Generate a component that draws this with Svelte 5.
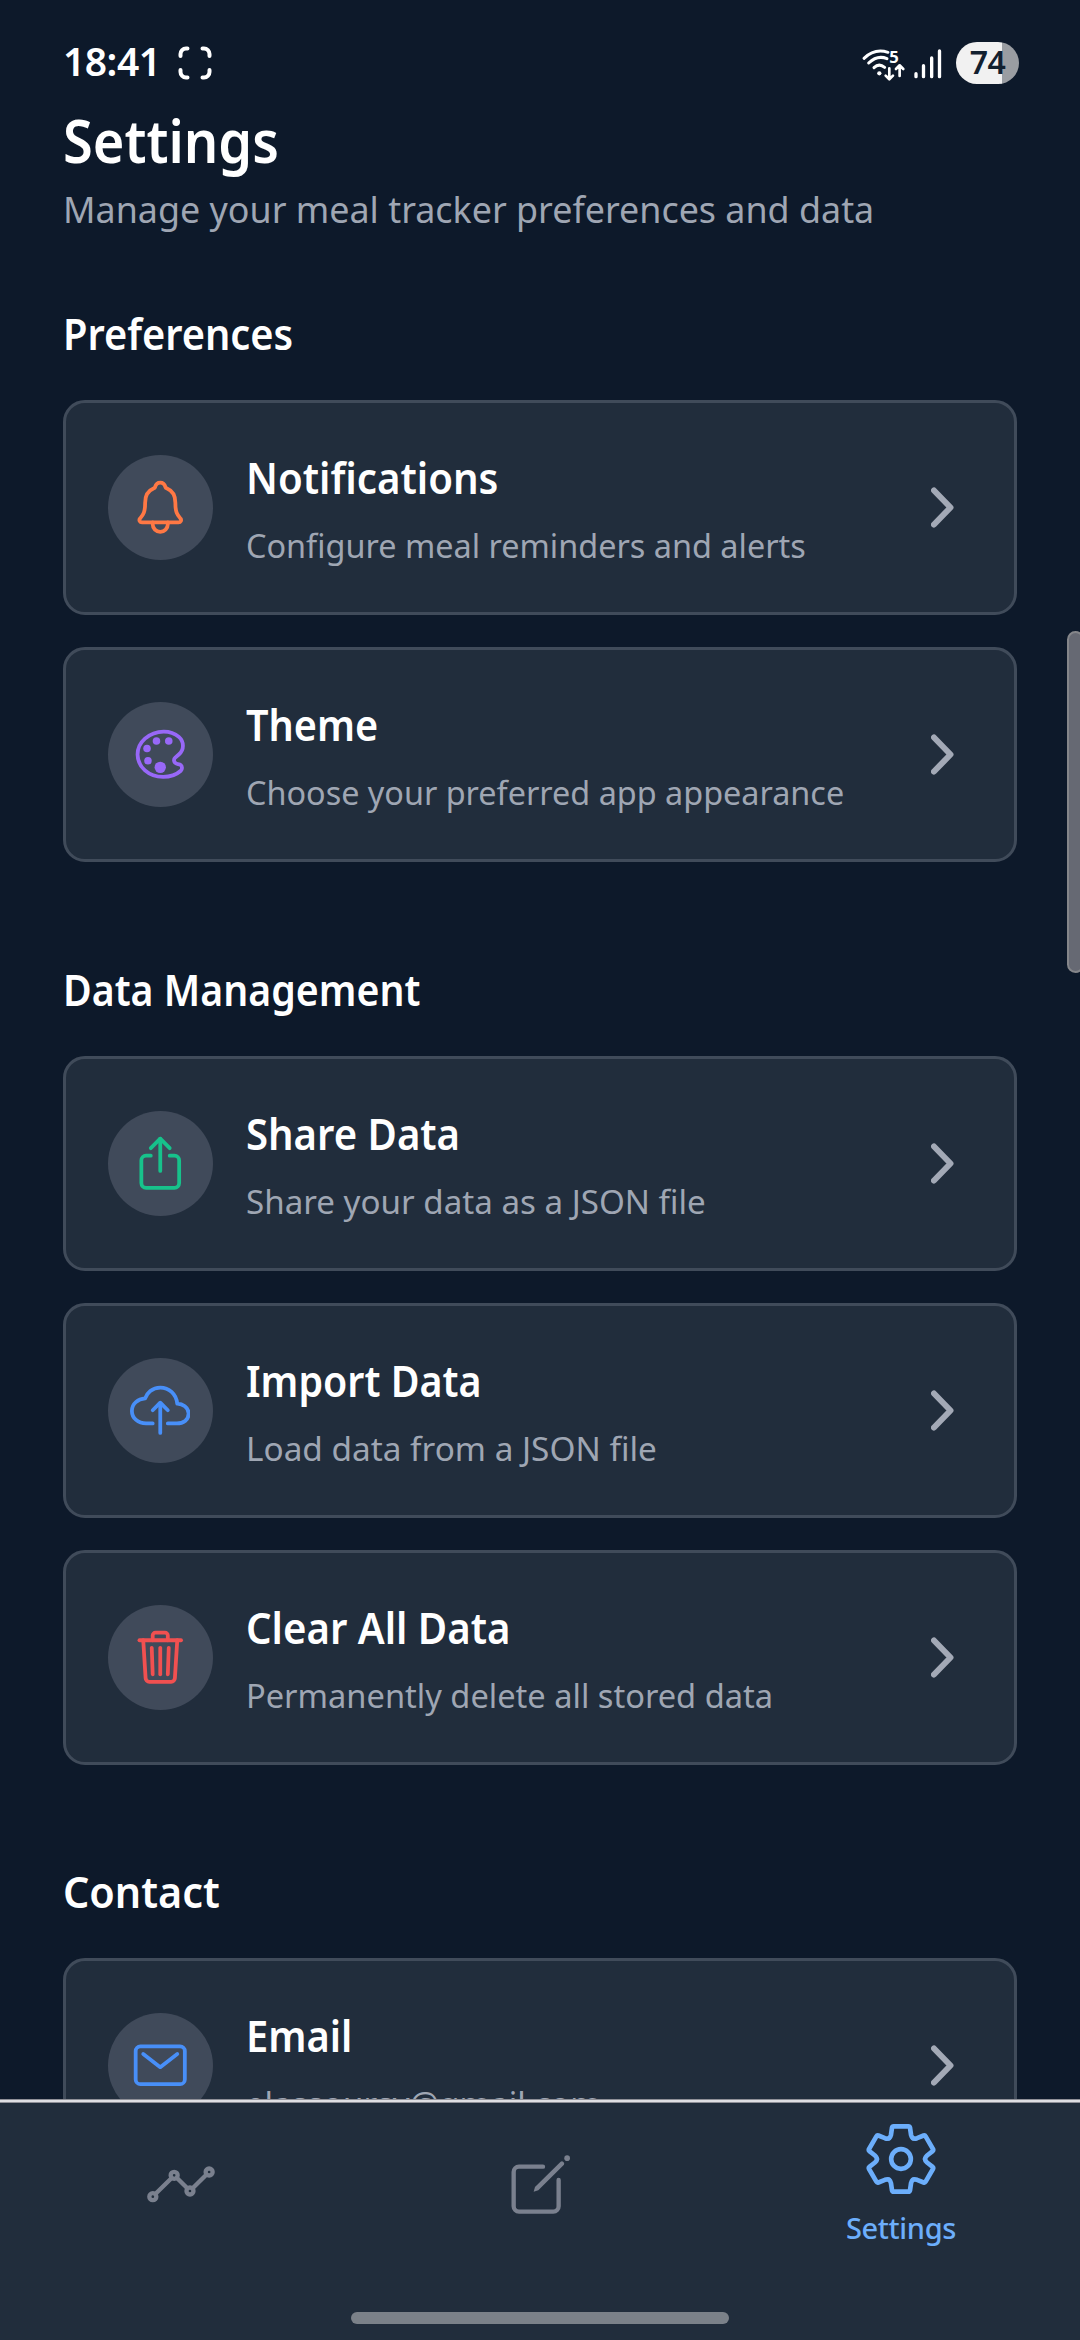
<script>
  // `fit` values condense the font horizontally, string by string.
  const sections = [
    {
      title: 'Preferences', fit: 0.904,
      rows: [
        { icon: 'bell', color: '#ff7844', title: 'Notifications', fit: 0.914, sub: 'Configure meal reminders and alerts', subFit: 0.982 },
        { icon: 'palette', color: '#9868f8', title: 'Theme', fit: 0.9, sub: 'Choose your preferred app appearance', subFit: 0.981 }
      ]
    },
    {
      title: 'Data Management', fit: 0.892,
      rows: [
        { icon: 'share', color: '#17c28b', title: 'Share Data', fit: 0.911, sub: 'Share your data as a JSON file', subFit: 1.004 },
        { icon: 'cloud', color: '#488ff8', title: 'Import Data', fit: 0.895, sub: 'Load data from a JSON file', subFit: 1.01 },
        { icon: 'trash', color: '#f15050', title: 'Clear All Data', fit: 0.912, sub: 'Permanently delete all stored data', subFit: 0.988 }
      ]
    },
    {
      title: 'Contact', fit: 0.939,
      rows: [
        { icon: 'mail', color: '#488ff8', title: 'Email', fit: 0.905, sub: 'elassoursy@gmail.com', subFit: 0.998 }
      ]
    }
  ];

  const paths = {
    bell: ['M427.68 351.43C402 320 383.87 304 383.87 217.35 383.87 138 343.35 109.73 310 96c-4.43-1.82-8.6-6-9.95-10.55C294.2 65.54 277.8 48 256 48s-38.21 17.55-44 37.47c-1.35 4.6-5.52 8.71-9.95 10.53-33.39 13.75-73.87 41.92-73.87 121.35C128.13 304 110 320 84.32 351.43 73.68 364.45 83 384 101.61 384h308.88c18.51 0 27.77-19.61 17.19-32.57z', 'M320 384v16a64 64 0 01-128 0v-16'],
    palette: ['M430.11 347.9c-6.6-6.1-16.3-7.6-24.6-9-11.5-1.9-15.9-4-22.6-10-14.3-12.7-14.3-31.1 0-43.8l30.3-26.9c46.4-41 46.4-108.2 0-149.2-34.2-30.1-80.1-45-127.8-45-55.7 0-113.9 20.3-158.8 60.1-83.5 73.8-83.5 194.7 0 268.5 41.5 36.7 97.5 55 152.9 55.4h1.7c55.4 0 110-17.9 148.8-52.4 14.4-12.7 11.99-36.6.1-47.7z'],
    share: ['M336 192h40a40 40 0 0140 40v192a40 40 0 01-40 40H136a40 40 0 01-40-40V232a40 40 0 0140-40h40', 'M336 128l-80-80-80 80', 'M256 321V48'],
    cloud: ['M320 367.79h76c55 0 100-29.21 100-83.6s-53-81.47-96-83.6c-8.89-85.06-71-136.8-144-136.8-69 0-113.44 45.79-128 91.2-60 5.7-112 43.88-112 106.4s54 106.4 120 106.4h56', 'M320 255.79l-64-64-64 64', 'M256 448.21V207.79'],
    trash: ['M112 112l20 320c.95 18.49 14.4 32 32 32h184c17.67 0 30.87-13.51 32-32l20-320', 'M80 112h352', 'M192 112V72a23.93 23.93 0 0124-24h80a23.93 23.93 0 0124 24v40', 'M256 176v224', 'M184 176l8 224', 'M328 176l-8 224'],
    mail: ['M88 96h336a40 40 0 0140 40v240a40 40 0 01-40 40H88a40 40 0 01-40-40V136a40 40 0 0140-40z', 'M112 160l144 112 144-112']
  };
  const dots = [[224, 144, 32], [328, 144, 32], [144, 208, 32], [152, 311, 32], [256, 367, 48]];
  const teeth = [0, 60, 120, 180, 240, 300];
</script>

<div class="phone">
  <header class="status">
    <span class="time">18:41</span>
    <svg class="scan" viewBox="0 0 34 34"><path d="M2.5 10V8a5.500 5.500 0 015.500-5.500h1.500M24.500 2.500H26A5.500 5.500 0 0131.500 8v2M31.500 24v2a5.500 5.500 0 01-5.500 5.500h-1.500M9.500 31.500H8A5.500 5.500 0 012.500 26v-2" /></svg>
    <div class="spacer"></div>
    <svg class="wifi" viewBox="36 54 130 100">
      <path class="arc" d="M42 85Q74 54 114 67M56 99Q82 74 111 86M72 113Q87 98 104 112" />
      <circle cx="88" cy="130" r="6.500" />
      <text x="118" y="98">5</text>
      <path class="arrow" d="M118 115v31M107 137l11 11 11-11M149 138v-30M138 117l11-11 11 11" />
    </svg>
    <svg class="signal" viewBox="191 56 84 90"><path d="M197 130v9M219.500 106v33M244 83v56M267.500 62v77" /></svg>
    <div class="battery"><span>74</span></div>
  </header>

  <main>
    <h1><span class="fit" style:--fit={0.918}>Settings</span></h1>
    <p class="lead"><span class="fit" style:--fit={0.969}>Manage your meal tracker preferences and data</span></p>

    {#each sections as s}
      <section>
        <h2><span class="fit" style:--fit={s.fit}>{s.title}</span></h2>
        <div class="rows">
          {#each s.rows as r}
            <div class="card">
              <div class="badge">
                <svg class="icon" viewBox="0 0 512 512" style:color={r.color}>
                  {#each paths[r.icon] as d}<path {d} />{/each}
                  {#if r.icon === 'palette'}
                    {#each dots as [cx, cy, rad]}<circle {cx} {cy} r={rad} />{/each}
                  {/if}
                </svg>
              </div>
              <div class="text">
                <h3><span class="fit" style:--fit={r.fit}>{r.title}</span></h3>
                <p><span class="fit" style:--fit={r.subFit}>{r.sub}</span></p>
              </div>
              <svg class="chevron" viewBox="0 0 23 41"><path d="M3 3.500L19.500 20.500 3 37.500" /></svg>
            </div>
          {/each}
        </div>
      </section>
    {/each}
  </main>

  <nav>
    <div class="tabs">
      <div class="tab">
        <svg class="trend" viewBox="141 257 205 110">
          <path d="M166 341l49-48M231 293l31 31M278 324l41-41" />
          <circle cx="158.500" cy="349" r="10.500" /><circle cx="222.500" cy="285" r="10.500" /><circle cx="270" cy="332" r="10.500" /><circle cx="327.500" cy="275" r="10.500" />
        </svg>
      </div>
      <div class="tab">
        <svg class="compose" viewBox="1234 223 178 178">
          <path d="M1330 258H1258a16 16 0 00-16 16V377a16 16 0 0016 16H1361a16 16 0 0016-16V298" />
          <path class="solid" d="M1383 243a7 7 0 0110 9L1316 329l-14 4 4-14z" />
          <circle class="solid" cx="1402.500" cy="232.500" r="8.500" />
        </svg>
      </div>
      <div class="tab active">
        <svg class="gear" viewBox="-105 -105 210 210">
          {#each teeth as a}
            <path transform="rotate({a})" d="M-36 -62.400Q-31.700 -64.900 -30 -73L-27 -94Q-26 -98 -22 -98H22Q26 -98 27 -94L30 -73Q31.700 -64.900 36 -62.400" />
          {/each}
          <circle r="29.500" />
        </svg>
        <span class="label">Settings</span>
      </div>
    </div>
    <div class="home"></div>
  </nav>
  <div class="scrollbar"></div>
</div>

<style>
  :global(body) { margin: 0; background: #0d192a; }
  .phone {
    position: relative; display: flex; flex-direction: column;
    width: 1080px; height: 2340px; overflow: hidden;
    background: #0d192a; color: #fff;
    font-family: "Noto Sans", "Open Sans", sans-serif;
  }
  h1, h2, h3, p { margin: 0; font-weight: 600; white-space: nowrap; }
  svg { display: block; flex: none; fill: none; stroke: currentColor; stroke-linecap: round; stroke-linejoin: round; }
  .fit { display: inline-block; transform: scaleX(var(--fit)); transform-origin: left; }

  .status { display: flex; align-items: center; height: 100px; padding: 26px 61px 0 63px; box-sizing: border-box; flex: none; }
  .time { font-size: 39px; font-weight: 600; line-height: 54px; width: 115px; margin-top: -4px; letter-spacing: -0.5px; }
  .scan { width: 34px; height: 34px; stroke-width: 4; }
  .spacer { flex: 1; }
  .wifi { width: 43.300px; height: 33.300px; margin: 4px 9px 0 0; overflow: visible; }
  .wifi .arc { stroke-width: 9; }
  .wifi .arrow { stroke-width: 8; }
  .wifi circle { fill: #fff; stroke: none; }
  .wifi text { fill: #fff; stroke: none; font-size: 50px; font-weight: 700; }
  .signal { width: 28px; height: 30px; margin: 1px 14px 0 0; stroke-width: 10; }
  .battery {
    display: flex; justify-content: center; width: 63px; height: 42px; border-radius: 21px;
    background: linear-gradient(90deg, #f1f1f1 46px, #9a9da2 46px);
    color: #12202f; font-size: 32px; font-weight: 600; line-height: 40px; letter-spacing: -0.5px;
  }

  main { flex: 1; min-height: 0; overflow: hidden; padding: 0 63px; }
  h1 { font-size: 59px; line-height: 80px; }
  .lead { margin-top: 4px; font-size: 37px; font-weight: 400; line-height: 50px; color: #9fa6b3; }
  section { margin-top: 96.500px; }
  .lead + section { margin-top: 69px; }
  h2 { font-size: 44px; line-height: 60px; }
  .rows { display: flex; flex-direction: column; gap: 32px; margin-top: 37px; }
  .card {
    display: flex; align-items: center; height: 215px; box-sizing: border-box;
    padding: 0 60px 0 42px; border: 3px solid #404b5a; border-radius: 22px; background: #212d3c;
  }
  .badge { display: flex; align-items: center; justify-content: center; flex: none; width: 105px; height: 105px; border-radius: 50%; background: #404a5a; }
  .icon { width: 60.500px; height: 60.500px; margin-right: 1px; stroke-width: 32; }
  .icon circle { fill: currentColor; stroke: none; }
  .text { flex: 1; margin-left: 32.500px; }
  h3 { font-size: 44px; line-height: 60px; }
  .text p { margin: 16px 0 -1px; font-size: 33px; font-weight: 400; line-height: 46px; color: #9fa6b3; }
  .chevron { width: 23px; height: 41px; color: #a3a9b6; stroke-width: 6; }

  nav {
    display: flex; flex-direction: column; justify-content: space-between; align-items: center;
    flex: none; height: 241px; box-sizing: border-box; padding: 3px 0 16px;
    border-top: 1px solid #8e8f97; background: #212d3c;
    box-shadow: inset 0 2px #dedee3, inset 0 3px #8e8f97;
  }
  .tabs { display: flex; align-self: flex-start; width: 1080px; margin-left: 1px; }
  .tab { display: flex; flex: 1; flex-direction: column; align-items: center; justify-content: center; height: 163px; color: #7a808e; }
  .active { justify-content: flex-start; padding-top: 21px; box-sizing: border-box; color: #6caefb; }
  .trend { width: 68.300px; height: 36.700px; stroke-width: 13; }
  .compose { width: 59.300px; height: 59.300px; stroke-width: 13; }
  .compose .solid { fill: currentColor; stroke: none; }
  .gear { width: 70px; height: 70px; stroke-width: 14; }
  .label { margin-top: 14px; font-size: 29px; font-weight: 500; line-height: 40px; letter-spacing: -0.350px; }
  .home { width: 378px; height: 12px; border-radius: 6px; background: #7b8189; }
  .scrollbar {
    position: absolute; top: 631px; right: -4px; width: 17px; height: 342px; box-sizing: border-box;
    border: 2px solid #85868a; border-radius: 12px; background: #666973;
  }
</style>
